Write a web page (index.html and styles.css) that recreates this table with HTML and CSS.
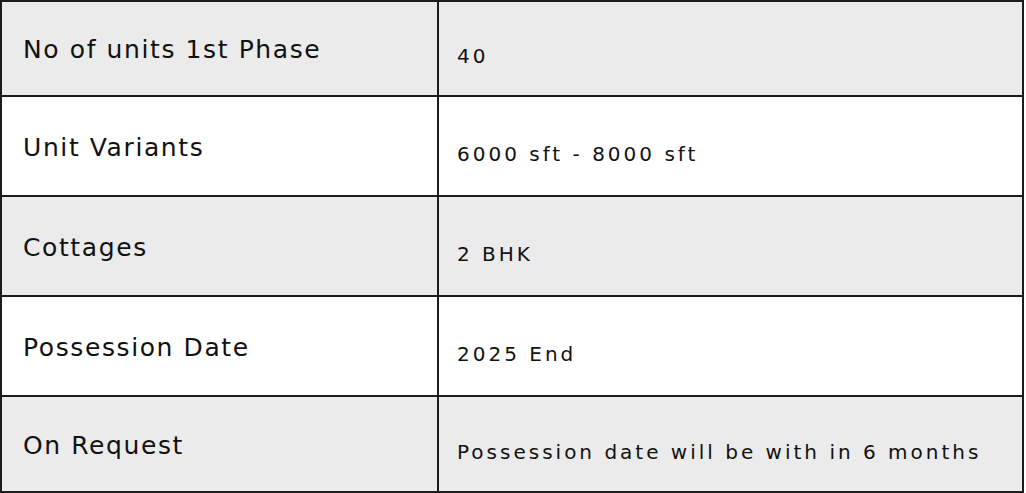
FILE: index.html
```html
<!DOCTYPE html>
<html lang="en">
<head>
<meta charset="utf-8">
<title>Project Details</title>
<link rel="stylesheet" href="styles.css">
</head>
<body>
<table class="specs">
  <tr class="row shade first">
    <td class="label">No of units 1st Phase</td>
    <td class="value">40</td>
  </tr>
  <tr class="row">
    <td class="label">Unit Variants</td>
    <td class="value">6000 sft - 8000 sft</td>
  </tr>
  <tr class="row shade">
    <td class="label">Cottages</td>
    <td class="value">2 BHK</td>
  </tr>
  <tr class="row">
    <td class="label">Possession Date</td>
    <td class="value">2025 End</td>
  </tr>
  <tr class="row shade last">
    <td class="label">On Request</td>
    <td class="value">Possession date will be with in 6 months</td>
  </tr>
</table>
</body>
</html>
```
FILE: styles.css
```css
html, body {
  margin: 0;
  padding: 0;
  background: #ffffff;
}
.specs {
  border-collapse: collapse;
  width: 1024px;
  font-family: "DejaVu Sans", "Liberation Sans", sans-serif;
  color: #111111;
}
.row td {
  border: 2px solid #1c1c1c;
  height: 100px;
  box-sizing: border-box;
  vertical-align: middle;
}
.row.first td {
  height: 95px;
}
.row.last td {
  height: 96px;
}
.row.shade td {
  background: #ebebeb;
}
.label {
  width: 437px;
  padding: 3px 0 0 21px;
  font-size: 25px;
  line-height: 32px;
  letter-spacing: 1.6px;
}
.value {
  padding: 15px 0 0 18px;
  font-size: 20px;
  line-height: 28px;
  letter-spacing: 3px;
}
```
